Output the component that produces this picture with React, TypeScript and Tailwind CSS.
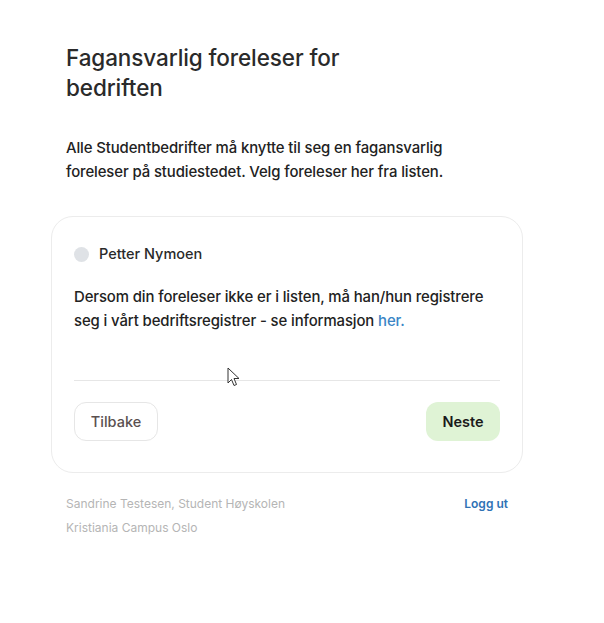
export default function App() {
  return (
    <div
      className="min-h-screen bg-white text-[#222]"
      style={{ fontFamily: 'Inter, "Noto Sans", sans-serif' }}
    >
      <div className="ml-[51px] w-[472px] pt-[43px]">
        <h1 className="px-[15px] text-[22.5px] leading-[30px] font-medium tracking-[-0.1px] text-[#2a2a2a]">
          Fagansvarlig foreleser for
          <br />
          bedriften
        </h1>

        <p className="mt-[33px] px-[15px] text-[14.9px] leading-[24px] font-medium tracking-[-0.1px] text-[#222]">
          Alle Studentbedrifter må knytte til seg en fagansvarlig
          <br />
          foreleser på studiestedet. Velg foreleser her fra listen.
        </p>

        <div className="relative mt-[32px] rounded-[22px] border border-[#ececec] px-[22px] pt-[25px] pb-[31px]">
          <label className="flex h-[24px] items-center gap-[10px] text-[14.5px] font-medium text-[#2a2a2a]">
            <span className="h-[15px] w-[15px] rounded-full bg-[#dfe2e6]" />
            Petter Nymoen
          </label>

          <p className="mt-[19px] text-[14.9px] leading-[24px] font-medium tracking-[-0.1px] text-[#222]">
            Dersom din foreleser ikke er i listen, må han/hun registrere
            <br />
            seg i vårt bedriftsregistrer - se informasjon{' '}
            <a className="text-[#3a85c6]">her.</a>
          </p>

          <div className="mt-[47px] h-px bg-[#e6e6e6]" />

          <div className="mt-[21px] flex items-center justify-between">
            <button className="h-[39px] w-[84px] rounded-[12px] border border-[#e6e6e6] text-[14.5px] font-medium text-[#5a5050]">
              Tilbake
            </button>
            <button className="h-[39px] w-[74px] rounded-[12px] bg-[#dff3d5] text-[14.5px] font-semibold text-[#1a1a1a]">
              Neste
            </button>
          </div>

          {/* mouse cursor from the screenshot */}
          <svg
            className="absolute left-[175px] top-[150px]"
            width="14"
            height="21"
            viewBox="0 0 14 21"
          >
            <path
              d="M1 1 L1 16 L4.5 12.5 L7 18.5 L9.5 17.5 L7 11.5 L12 11.5 Z"
              fill="#fff"
              stroke="#333"
              strokeWidth="1"
              strokeLinejoin="round"
            />
          </svg>
        </div>

        <div className="mt-[19px] flex justify-between px-[15px] text-[12px] leading-[24px]">
          <div className="text-[#b5b5b5]">
            <div>Sandrine Testesen, Student Høyskolen</div>
            <div>Kristiania Campus Oslo</div>
          </div>
          <a className="font-semibold text-[#2f72b5]">Logg ut</a>
        </div>
      </div>
    </div>
  );
}
